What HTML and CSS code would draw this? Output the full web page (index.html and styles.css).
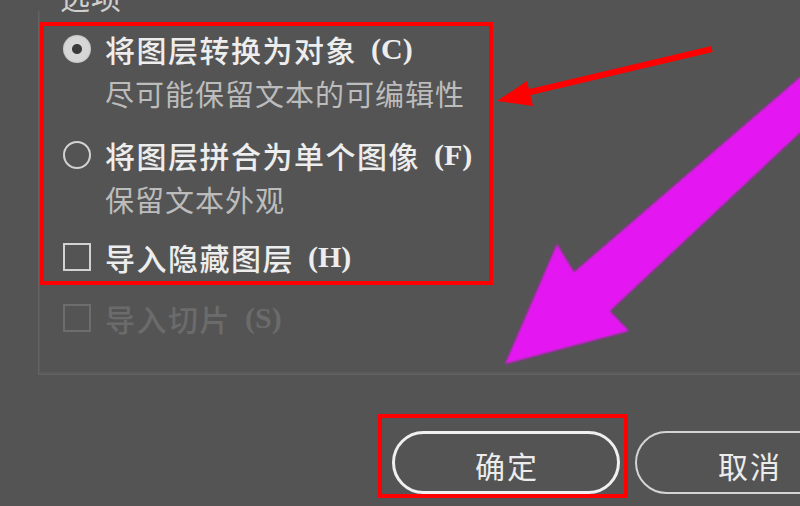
FILE: index.html
```html
<!DOCTYPE html>
<html lang="zh-CN">
<head>
<meta charset="utf-8">
<title>选项</title>
<link rel="stylesheet" href="styles.css">
</head>
<body>
<div class="dialog">
  <div class="group-title">选项</div>
  <div class="group">
    <div class="mark-box">
      <div class="option">
        <div class="line main"><span class="radio radio-on"></span>将图层转换为对象<span class="key">(C)</span></div>
        <div class="line sub">尽可能保留文本的可编辑性</div>
      </div>
      <div class="option gap-a">
        <div class="line main"><span class="radio"></span>将图层拼合为单个图像<span class="key">(F)</span></div>
        <div class="line sub">保留文本外观</div>
      </div>
      <div class="option gap-b">
        <div class="line main"><span class="check"></span>导入隐藏图层<span class="key">(H)</span></div>
      </div>
    </div>
    <div class="line main disabled"><span class="check"></span>导入切片<span class="key">(S)</span></div>
  </div>
  <div class="buttons">
    <div class="mark-btn"><button class="btn btn-default">确定</button></div>
    <button class="btn btn-cancel">取消</button>
  </div>
</div>
<svg class="annotations" width="800" height="506" viewBox="0 0 800 506">
  <defs>
    <filter id="soft" x="-5%" y="-5%" width="110%" height="110%">
      <feGaussianBlur stdDeviation="1.3"/>
    </filter>
  </defs>
  <line x1="712" y1="49" x2="526" y2="93" stroke="#ff0000" stroke-width="6"/>
  <polygon points="497,101 527,81 533,106" fill="#ff0000"/>
  <polygon filter="url(#soft)" points="805,73 574,272 557,244 505,364 629,331 610,311 805,128" fill="#e412f1"/>
</svg>
</body>
</html>
```

FILE: styles.css
```css
html, body {
  margin: 0;
  padding: 0;
  background: #545454;
}
body {
  width: 800px;
  height: 506px;
  overflow: hidden;
  position: relative;
  font-family: "Noto Sans CJK SC", "Noto Sans", sans-serif;
  color: #ececec;
}
.dialog {
  display: flex;
  flex-direction: column;
}
.group-title {
  margin-top: -19px;
  margin-left: 60px;
  height: 30px;
  line-height: 30px;
  font-size: 30px;
  letter-spacing: 1px;
  color: #cfcfcf;
}
.group {
  margin-left: 38px;
  border-left: 1px solid #626262;
  border-bottom: 1px solid #626262;
  box-shadow: inset 11px -12px 0 -10px #5b5b5b;
  padding-bottom: 33px;
  display: flex;
  flex-direction: column;
}
.mark-box {
  box-sizing: border-box;
  width: 453px;
  margin-left: 1px;
  margin-top: 11px;
  border: 4px solid #ff0000;
  padding: 0 0 1px 19px;
}
.option {
  display: flex;
  flex-direction: column;
}
.gap-a { margin-top: 18px; }
.gap-b { margin-top: 14px; }
.line {
  display: flex;
  align-items: center;
  white-space: nowrap;
}
.main {
  height: 46px;
  font-size: 30px;
  letter-spacing: 1.5px;
  font-weight: 500;
  color: #ededed;
}
.sub {
  height: 42px;
  font-size: 29px;
  letter-spacing: 1px;
  margin-left: 42px;
  color: #bcbcbc;
}
.key {
  font-family: "Liberation Serif", serif;
  letter-spacing: 0;
  margin-left: 14px;
  font-weight: 600;
}
.radio, .check {
  box-sizing: border-box;
  flex: 0 0 28px;
  width: 28px;
  height: 28px;
  margin-right: 14px;
  border: 2px solid #d2d2d2;
}
.radio {
  border-radius: 50%;
}
.radio-on {
  border: none;
  background: radial-gradient(circle, #3a3a3a 0 4.5px, #d6d6d6 5.5px 12px, #c4c4c4 14px);
}
.disabled {
  margin-top: 10px;
  padding-left: 24px;
  color: #6b6b6b;
}
.disabled .check {
  border-color: #6d6d6d;
}
.buttons {
  display: flex;
  align-items: flex-end;
  margin-top: 39px;
  margin-left: 378px;
}
.mark-btn {
  border: 4px solid #ff0000;
  padding: 13px 4px 0 10px;
  display: flex;
}
.btn {
  box-sizing: border-box;
  width: 228px;
  height: 63px;
  border-radius: 32px;
  background: #545454;
  font-family: "Noto Sans CJK SC", sans-serif;
  font-size: 30px;
  letter-spacing: 2px;
  padding: 4px 0 0 2px;
  color: #ececec;
  flex: 0 0 auto;
}
.btn-default {
  border: 3px solid #f0f0f0;
}
.btn-cancel {
  border: 2px solid #d4d4d4;
  margin-left: 7px;
  margin-bottom: 4px;
}
.annotations {
  position: absolute;
  left: 0;
  top: 0;
  pointer-events: none;
}
```
